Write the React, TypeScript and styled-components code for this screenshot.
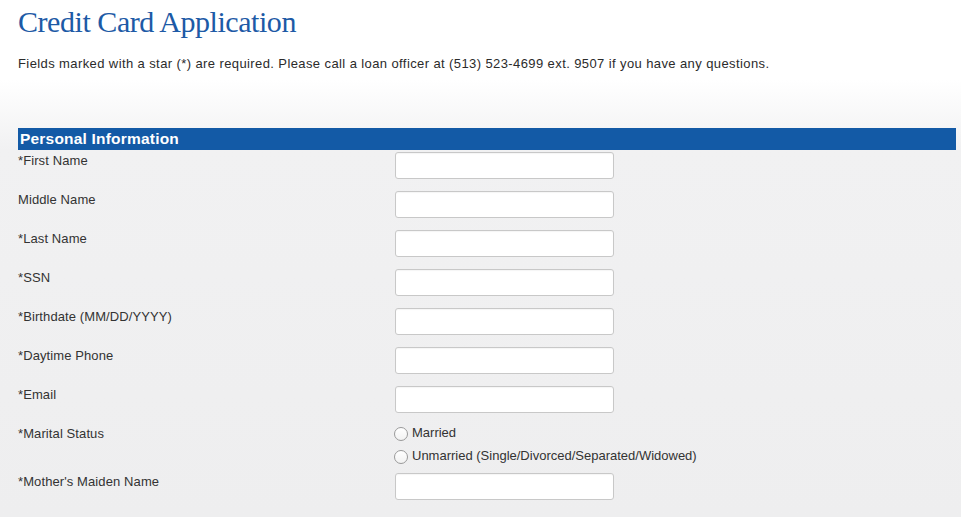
import React from 'react';
import styled, { createGlobalStyle } from 'styled-components';

const GlobalStyle = createGlobalStyle`
  html, body {
    margin: 0;
    padding: 0;
    background: #eeeeef;
  }
  body {
    font-family: 'Liberation Sans', Arial, sans-serif;
    color: #333;
  }
`;

const Page = styled.div`
  min-height: 517px;
  background: linear-gradient(to bottom, #ffffff 0px, #ffffff 80px, #f1f1f2 150px, #eeeeef 517px);
  padding: 0 5px 0 18px;
  overflow: hidden;
`;

const Title = styled.h1`
  margin: 0;
  padding-top: 4px;
  font-family: 'Liberation Serif', 'Times New Roman', serif;
  font-weight: normal;
  font-size: 30px;
  line-height: 36px;
  letter-spacing: -0.45px;
  color: #1d5aa6;
`;

const Intro = styled.p`
  margin: 16px 0 0;
  font-size: 13px;
  line-height: 16px;
  letter-spacing: 0.4px;
  color: #2b2b2b;
`;

const SectionBar = styled.div`
  margin-top: 56px;
  height: 22px;
  background: #135aa6;
  color: #fff;
  font-weight: bold;
  font-size: 15.5px;
  line-height: 22px;
  letter-spacing: 0.2px;
  padding-left: 2px;
`;

const Form = styled.div`
  display: grid;
  grid-template-columns: 377px 1fr;
  padding-top: 2px;
`;

const Label = styled.div<{ $tall?: boolean }>`
  font-size: 13px;
  line-height: 16px;
  letter-spacing: 0.1px;
  padding-top: 1px;
  height: ${p => (p.$tall ? 48 : 39)}px;
  color: #333;
  box-sizing: border-box;
`;

const Field = styled.div<{ $tall?: boolean }>`
  height: ${p => (p.$tall ? 48 : 39)}px;
`;

const TextInput = styled.input`
  display: block;
  box-sizing: border-box;
  width: 219px;
  height: 27px;
  margin: 0;
  border: 1px solid #c8c8c8;
  border-radius: 3px;
  background: #fff;
  box-shadow: inset 0 1px 1px rgba(0, 0, 0, 0.04);
`;

const RadioGroup = styled.div`
  display: flex;
  flex-direction: column;
`;

const RadioLine = styled.label`
  display: flex;
  align-items: center;
  height: 23px;
  font-size: 13px;
  color: #333;
  margin-top: -4px;
  margin-bottom: 4px;
`;

const RadioDot = styled.span`
  display: inline-block;
  box-sizing: border-box;
  width: 14px;
  height: 14px;
  margin: 3px 4px 0 -1px;
  border: 1px solid #9a9a9a;
  border-radius: 50%;
  background: linear-gradient(to bottom, #ffffff, #f2f2f2);
`;

const fields: { label: string }[] = [
  { label: '*First Name' },
  { label: 'Middle Name' },
  { label: '*Last Name' },
  { label: '*SSN' },
  { label: '*Birthdate (MM/DD/YYYY)' },
  { label: '*Daytime Phone' },
  { label: '*Email' },
];

export default function App() {
  return (
    <>
      <GlobalStyle />
      <Page>
        <Title>Credit Card Application</Title>
        <Intro>
          Fields marked with a star (*) are required. Please call a loan officer at (513) 523-4699 ext. 9507 if you have any questions.
        </Intro>
        <SectionBar>Personal Information</SectionBar>
        <Form>
          {fields.map(f => (
            <React.Fragment key={f.label}>
              <Label>{f.label}</Label>
              <Field>
                <TextInput type="text" />
              </Field>
            </React.Fragment>
          ))}
          <Label $tall>*Marital Status</Label>
          <Field $tall>
            <RadioGroup>
              <RadioLine>
                <RadioDot />
                Married
              </RadioLine>
              <RadioLine>
                <RadioDot />
                Unmarried (Single/Divorced/Separated/Widowed)
              </RadioLine>
            </RadioGroup>
          </Field>
          <Label>*Mother's Maiden Name</Label>
          <Field>
            <TextInput type="text" />
          </Field>
        </Form>
      </Page>
    </>
  );
}
